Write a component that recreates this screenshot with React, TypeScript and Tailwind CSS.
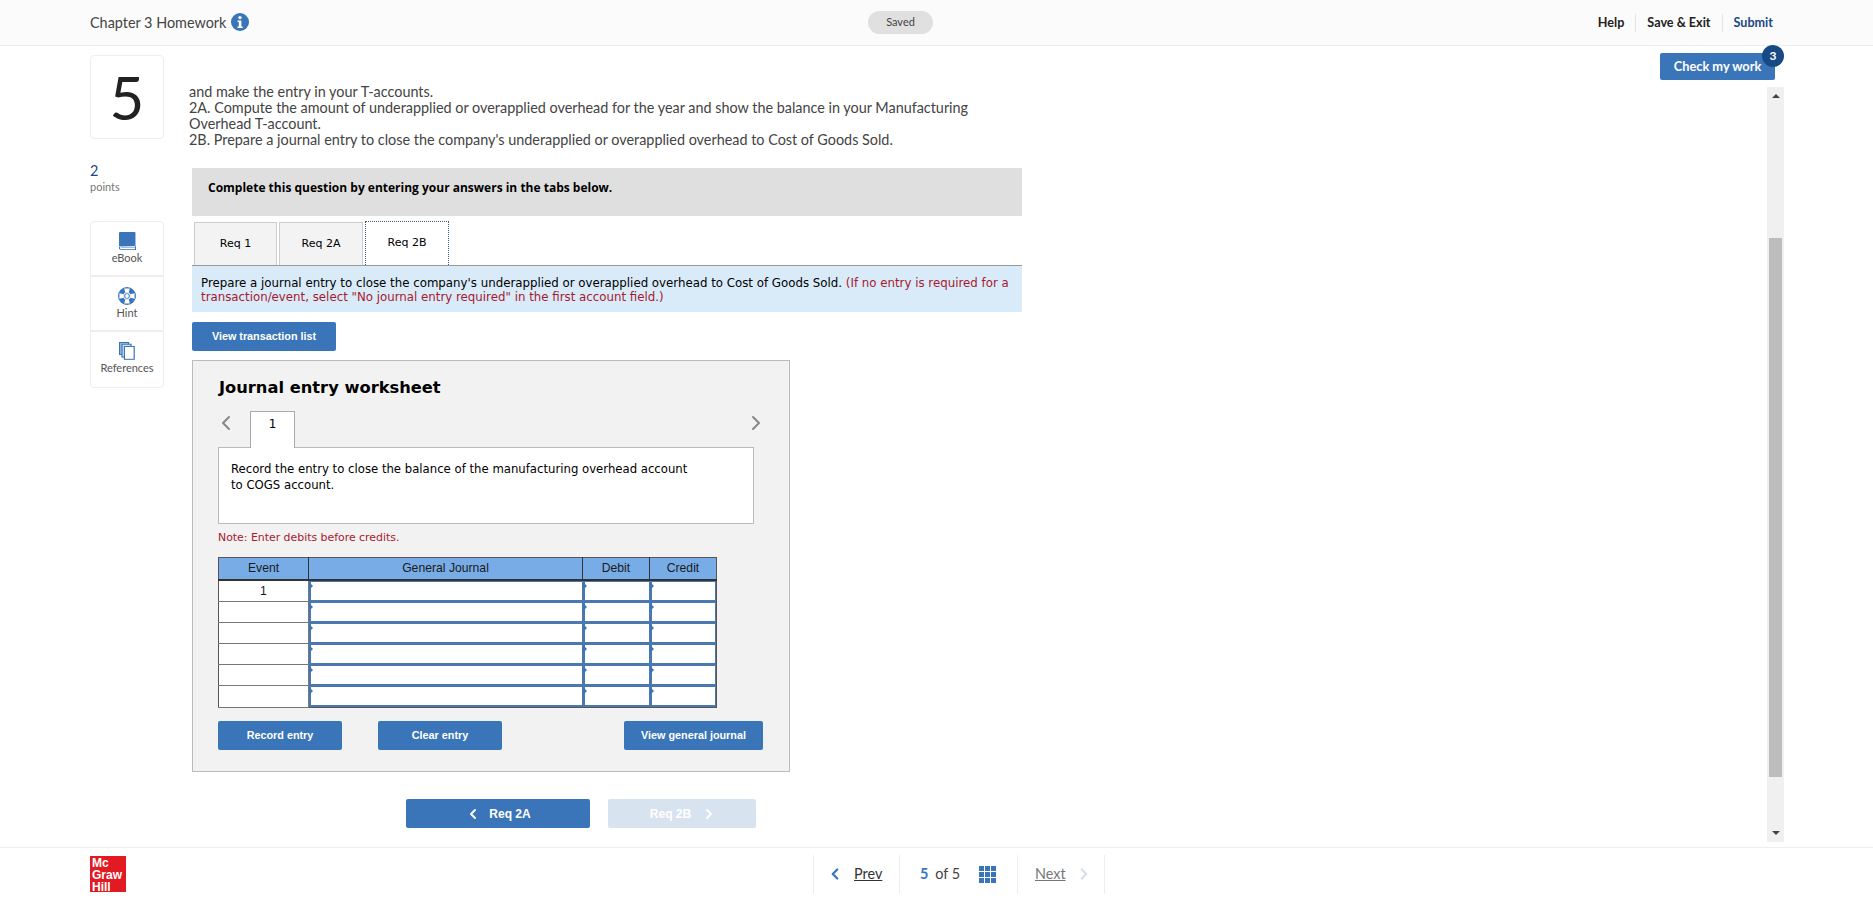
import React from 'react';
import { ChevronLeft, ChevronRight } from 'lucide-react';

const ROWS = [1, 2, 3, 4, 5, 6];

const InfoIcon = () => (
  <svg width="18" height="18" viewBox="0 0 18 18" className="ml-[5px]">
    <circle cx="9" cy="9" r="9" fill="#3a75b9" />
    <circle cx="9" cy="4.6" r="1.7" fill="#fff" />
    <path d="M6.6 7.4h3.8v6h1.3v1.5H6.5v-1.5h1.3V8.9H6.6z" fill="#fff" />
  </svg>
);

const BookIcon = () => (
  <svg width="17" height="18" viewBox="0 0 16 21" preserveAspectRatio="none">
    <rect x="0" y="0" width="15.5" height="17" rx="1" fill="#3a75b9" />
    <path d="M0.5 17.5v1.5a1.5 1.5 0 0 0 1.5 1.5h13.5v-4" fill="#fff" stroke="#3a75b9" strokeWidth="1" />
    <path d="M2 18.2h13" stroke="#8fb1d9" strokeWidth="1" />
  </svg>
);

const HintIcon = () => (
  <svg width="18" height="18" viewBox="0 0 18 18">
    <circle cx="9" cy="9" r="9" fill="#3a75b9" />
    <circle cx="9" cy="9" r="3.8" fill="#fff" />
    <path d="M6.2 1.4h5.6l-1 4.2H7.2zM6.2 16.6h5.6l-1-4.2H7.2zM1.4 6.2v5.6l4.2-1V7.2zM16.6 6.2v5.6l-4.2-1V7.2z" fill="#fff" />
    <circle cx="9" cy="9" r="2.8" fill="#3a75b9" />
    <circle cx="9" cy="9" r="1.9" fill="#fff" />
  </svg>
);

const RefsIcon = () => (
  <svg width="16" height="18" viewBox="0 0 16 21" preserveAspectRatio="none" fill="#fff" stroke="#3a75b9" strokeWidth="1.2">
    <rect x="0.6" y="0.6" width="9" height="14" fill="#a9c4e4" />
    <rect x="3" y="2.6" width="9" height="15" fill="#dbe6f3" />
    <rect x="5.4" y="5.2" width="9.8" height="15" fill="#fff" />
  </svg>
);

const GridIcon = () => (
  <div className="grid grid-cols-3 gap-px w-[17px]">
    {[0, 1, 2, 3, 4, 5, 6, 7, 8].map((i) => (
      <div key={i} className="h-[5px] bg-[#3a75b9]" />
    ))}
  </div>
);

const InputCell = () => (
  <td className="p-0">
    <div className="relative h-[21px] border-l-2 border-r border-t border-b-2 border-[#4a78b0] bg-white">
      <span className="absolute -left-[2px] top-0 border-y-[4px] border-l-[4px] border-y-transparent border-l-[#3a75b9]" />
    </div>
  </td>
);

const ToolItem = ({ icon, label, last }: { icon: React.ReactNode; label: string; last?: boolean }) => (
  <div className={`h-[55px] flex flex-col items-center pt-[10px] ${last ? '' : 'border-b-2 border-[#eeeeee]'}`}>
    <div className="h-[18px] flex items-center">{icon}</div>
    <div className="text-[11px] leading-[14px] mt-[1px] text-[#555]">{label}</div>
  </div>
);

const ActionButton = ({ label, className }: { label: string; className: string }) => (
  <button className={`h-[29px] bg-[#3a75b9] text-white font-bold text-[10.8px] rounded-[2px] font-['Liberation_Sans',sans-serif] ${className}`}>
    {label}
  </button>
);

export default function App() {
  return (
    <div className="w-[1873px] h-[900px] flex flex-col bg-white overflow-hidden font-['Lato',sans-serif] text-[#333]">
      {/* top bar */}
      <header className="h-[46px] shrink-0 flex items-center bg-[#fbfbfb] border-b border-[#eeeeee] pl-[90px] pr-[100px]">
        <div className="w-[778px] flex items-center text-[14.4px] text-[#444]">
          Chapter 3 Homework
          <InfoIcon />
        </div>
        <div className="w-[65px] h-[23px] flex items-center justify-center rounded-full bg-[#e0e0e0] text-[11px] text-[#444]">Saved</div>
        <div className="flex-1 flex justify-end items-center text-[12.6px] font-bold text-[#222]">
          <span className="pr-[11px] border-r border-[#e4e4e4] leading-[18px]">Help</span>
          <span className="px-[11px] border-r border-[#e4e4e4] leading-[18px]">Save &amp; Exit</span>
          <span className="pl-[11px] text-[#1a4a85] leading-[18px]">Submit</span>
        </div>
      </header>

      <main className="flex-1 flex pl-[90px] min-h-0">
        {/* left rail */}
        <aside className="w-[74px] shrink-0 pt-[9px]">
          <div className="h-[84px] flex items-center justify-center border border-[#eeeeee] rounded-[4px] text-[60px] leading-none text-[#222]">5</div>
          <div className="mt-[24px] text-[14.4px] leading-[16px] text-[#1a4a85]">2</div>
          <div className="text-[11px] leading-[16px] text-[#777]">points</div>
          <div className="mt-[26px] border border-[#eeeeee] rounded-[4px]">
            <ToolItem icon={<BookIcon />} label="eBook" />
            <ToolItem icon={<HintIcon />} label="Hint" />
            <ToolItem icon={<RefsIcon />} label="References" last />
          </div>
        </aside>

        {/* question body */}
        <section className="ml-[25px] w-[833px] shrink-0 pt-[38px]">
          <p className="text-[14.4px] leading-[16px] text-[#444] whitespace-nowrap">
            and make the entry in your T-accounts.<br />
            2A. Compute the amount of underapplied or overapplied overhead for the year and show the balance in your Manufacturing<br />
            Overhead T-account.<br />
            2B. Prepare a journal entry to close the company's underapplied or overapplied overhead to Cost of Goods Sold.
          </p>

          <div className="ml-[3px] mt-[20px] w-[830px] font-['DejaVu_Sans',sans-serif]">
            <div className="h-[48px] bg-[#dfdfdf] pl-[16px] pt-[13px] font-['Open_Sans',sans-serif] text-[12px] font-bold leading-[14px] text-black">
              Complete this question by entering your answers in the tabs below.
            </div>

            <div className="mt-[6px] h-[44px] flex items-end gap-[2px] pl-[2px] border-b border-[#999]">
              <div className="w-[83px] h-[43px] flex items-center justify-center bg-[#f3f3f3] border border-b-0 border-[#ccc] text-[11px] text-black">Req 1</div>
              <div className="w-[84px] h-[43px] flex items-center justify-center bg-[#f3f3f3] border border-b-0 border-[#ccc] text-[11px] text-black">Req 2A</div>
              <div className="w-[84px] h-[44px] flex items-center justify-center bg-white border border-b-0 border-dotted border-[#3a5f8a] text-[11px] text-black">Req 2B</div>
            </div>

            <div className="h-[46px] bg-[#d9ebf9] pl-[9px] pt-[10px] text-[11.8px] leading-[14px] text-black whitespace-nowrap">
              Prepare a journal entry to close the company's underapplied or overapplied overhead to Cost of Goods Sold. <span className="text-[#a6192e]">(If no entry is required for a<br />transaction/event, select "No journal entry required" in the first account field.)</span>
            </div>

            <ActionButton label="View transaction list" className="mt-[10px] block w-[144px]" />

            {/* worksheet */}
            <div className="mt-[9px] w-[598px] h-[412px] border border-[#bbbbbb] bg-[#f2f2f2] pl-[25px] pr-[25px]">
              <h2 className="mt-[16px] ml-[1px] text-[16.3px] leading-[22px] font-bold text-black">Journal entry worksheet</h2>

              <div className="mt-[12px] h-[36px] flex w-[550px]">
                <ChevronLeft size={24} strokeWidth={2} className="text-[#888] ml-[-4px]" />
                <div className="ml-[12px] w-[45px] h-[37px] z-10 bg-white border border-b-0 border-[#aaa] flex justify-center pt-[3px] text-[12px] text-black">1</div>
                <ChevronRight size={24} strokeWidth={2} className="text-[#888] ml-auto" />
              </div>

              <div className="w-[536px] h-[77px] bg-white border border-[#bbbbbb] px-[12px] pt-[13px] text-[11.7px] leading-[16px] text-black">
                Record the entry to close the balance of the manufacturing overhead account<br />to COGS account.
              </div>

              <div className="mt-[7px] text-[10.9px] leading-[14px] text-[#a6192e]">Note: Enter debits before credits.</div>

              <table className="mt-[12px] w-[499px] table-fixed border-collapse border border-[#555] font-['Liberation_Sans',sans-serif] text-[12.2px] text-[#1a1a1a]">
                <colgroup>
                  <col className="w-[90px]" />
                  <col className="w-[274px]" />
                  <col className="w-[67px]" />
                  <col className="w-[67px]" />
                </colgroup>
                <thead>
                  <tr className="h-[22px] bg-[#78ace6] border-b-2 border-[#333]">
                    <th className="font-normal border-r border-[#333]">Event</th>
                    <th className="font-normal border-r border-[#333]">General Journal</th>
                    <th className="font-normal border-r border-[#333]">Debit</th>
                    <th className="font-normal">Credit</th>
                  </tr>
                </thead>
                <tbody>
                  {ROWS.map((row) => (
                    <tr key={row} className="h-[21px] bg-white">
                      <td className="p-0 text-center border-b border-r border-[#777] leading-[20px]">{row === 1 ? '1' : ''}</td>
                      <InputCell />
                      <InputCell />
                      <InputCell />
                    </tr>
                  ))}
                </tbody>
              </table>

              <div className="mt-[13px] flex w-[545px]">
                <ActionButton label="Record entry" className="w-[124px]" />
                <ActionButton label="Clear entry" className="ml-[36px] w-[124px]" />
                <ActionButton label="View general journal" className="ml-auto w-[139px]" />
              </div>
            </div>

            {/* req nav */}
            <div className="mt-[27px] flex gap-[18px] pl-[214px] font-['Liberation_Sans',sans-serif] text-[12px] font-bold text-white">
              <button className="w-[184px] h-[29px] flex items-center justify-center gap-[8px] bg-[#3a75b9] rounded-[2px]">
                <ChevronLeft size={16} strokeWidth={3} /> Req 2A
              </button>
              <button className="w-[148px] h-[29px] flex items-center justify-center gap-[10px] pl-[3px] bg-[#d8e3f0] rounded-[2px]">
                Req 2B <ChevronRight size={16} strokeWidth={3} />
              </button>
            </div>
          </div>
        </section>

        {/* check my work + scroll track */}
        <aside className="ml-auto mr-[89px] w-[115px] pt-[7px] flex flex-col items-end">
          <div className="relative mr-[9px]">
            <button className="w-[115px] h-[27px] bg-[#3a75b9] rounded-[2px] text-white text-[12.8px] font-bold">Check my work</button>
            <span className="absolute -right-[9px] -top-[8px] w-[22px] h-[22px] rounded-full bg-[#174a85] text-white text-[12px] font-bold flex items-center justify-center">3</span>
          </div>
          <div className="mt-[7px] w-[17px] h-[755px] bg-[#f0f0f0] flex flex-col items-center">
            <span className="mt-[7px] border-x-[4px] border-b-[4px] border-x-transparent border-b-[#444]" />
            <div className="mt-[140px] w-[13px] h-[539px] bg-[#bdbdbd]" />
            <span className="mt-[54px] border-x-[4px] border-t-[4px] border-x-transparent border-t-[#444]" />
          </div>
        </aside>
      </main>

      {/* footer */}
      <footer className="h-[53px] shrink-0 flex items-center border-t border-[#eeeeee] pl-[90px]">
        <div className="w-[36px] h-[36px] bg-[#e21a23] text-white font-bold text-[12px] leading-[12px] pl-[2px] pt-[1px] font-['Liberation_Sans',sans-serif]">Mc<br />Graw<br />Hill</div>
        <nav className="ml-[687px] flex items-center h-[39px] text-[14.4px]">
          <div className="w-[87px] h-full flex items-center gap-[14px] pl-[17px] border-x border-[#eeeeee] text-[#333]">
            <ChevronLeft size={18} strokeWidth={3} className="text-[#3a75b9] -ml-[5px]" />
            <span className="underline -ml-[4px]">Prev</span>
          </div>
          <div className="w-[118px] h-full flex items-center pl-[20px] gap-[7px] border-r border-[#eeeeee] text-[#444]">
            <span className="font-bold text-[#3a75b9]">5</span> of 5
            <span className="ml-[12px]"><GridIcon /></span>
          </div>
          <div className="w-[87px] h-full flex items-center gap-[9px] pl-[17px] border-r border-[#eeeeee] text-[#777]">
            <span className="underline">Next</span>
            <ChevronRight size={18} strokeWidth={3} className="text-[#d3e0f0]" />
          </div>
        </nav>
      </footer>
    </div>
  );
}
